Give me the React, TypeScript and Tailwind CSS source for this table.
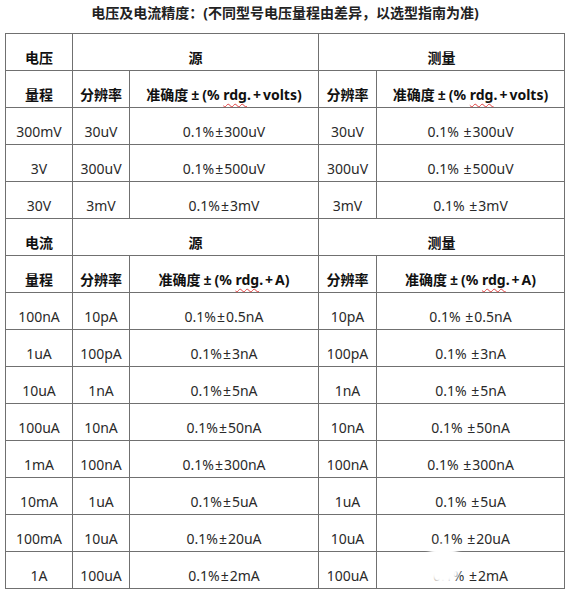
import React from 'react';

type Cell = { text: React.ReactNode; span?: number; bold?: boolean };

// 表头里的 rdg 带红色波浪线（拼写检查的痕迹）
const Rdg = () => (
  <span className="underline decoration-wavy decoration-[#e04040] decoration-1 underline-offset-[3px]">rdg</span>
);

const accHeader = (unit: string) => (
  <>
    准确度<span className="mx-[3px]">±</span>(% <Rdg />.<span className="mx-[2px]">+</span>{unit})
  </>
);

// 0.1%±xxx，测量列在 ± 前多一个空格
const acc = (v: string, gap = false) => (
  <>
    0.1%{gap ? ' ' : ''}
    <span className="mx-[1px]">±</span>
    {v}
  </>
);

const volt = [
  ['300mV', '30uV', '300uV'],
  ['3V', '300uV', '500uV'],
  ['30V', '3mV', '3mV'],
];

const amp = [
  ['100nA', '10pA', '0.5nA'],
  ['1uA', '100pA', '3nA'],
  ['10uA', '1nA', '5nA'],
  ['100uA', '10nA', '50nA'],
  ['1mA', '100nA', '300nA'],
  ['10mA', '1uA', '5uA'],
  ['100mA', '10uA', '20uA'],
  ['1A', '100uA', '2mA'],
];

const head = (kind: string, unit: string): Cell[][] => [
  [
    { text: kind, bold: true },
    { text: '源', span: 2, bold: true },
    { text: '测量', span: 2, bold: true },
  ],
  [
    { text: '量程', bold: true },
    { text: '分辨率', bold: true },
    { text: accHeader(unit), bold: true },
    { text: '分辨率', bold: true },
    { text: accHeader(unit), bold: true },
  ],
];

const body = (data: string[][]): Cell[][] =>
  data.map(([range, res, err]) => [
    { text: range },
    { text: res },
    { text: acc(err) },
    { text: res },
    { text: acc(err, true) },
  ]);

const rows: Cell[][] = [...head('电压', 'volts'), ...body(volt), ...head('电流', 'A'), ...body(amp)];

export default function App() {
  return (
    <div
      className="relative w-[569px] h-[592px] bg-white text-[#1a1a1a] pl-[5px]"
      style={{ fontFamily: '"Noto Sans", "Noto Sans CJK SC", sans-serif' }}
    >
      <div className="w-[560px] pt-[3px] text-center text-[14px] leading-[20px] font-bold text-[#222]">
        电压及电流精度：(不同型号电压量程由差异，以选型指南为准)
      </div>

      <div className="mt-[10px] w-[560px] grid grid-cols-[67px_57px_189px_58px_188px] auto-rows-[37px] border-l border-t border-[#707070]">
        {rows.map((row, i) =>
          row.map((cell, j) => (
            <div
              key={`${i}-${j}`}
              className={`border-r border-b border-[#707070] pt-[14px] text-center text-[14px] leading-[20px] whitespace-nowrap ${
                cell.span === 2 ? 'col-span-2' : ''
              } ${cell.bold ? 'font-bold text-[#111]' : 'text-[#2a2a2a]'}`}
            >
              {cell.text}
            </div>
          ))
        )}
      </div>

      {/* 右下角水印遮挡 */}
      <div className="absolute left-[427px] top-[544px] w-[33px] h-[40px] rounded-full bg-white blur-[2px]"></div>
    </div>
  );
}
